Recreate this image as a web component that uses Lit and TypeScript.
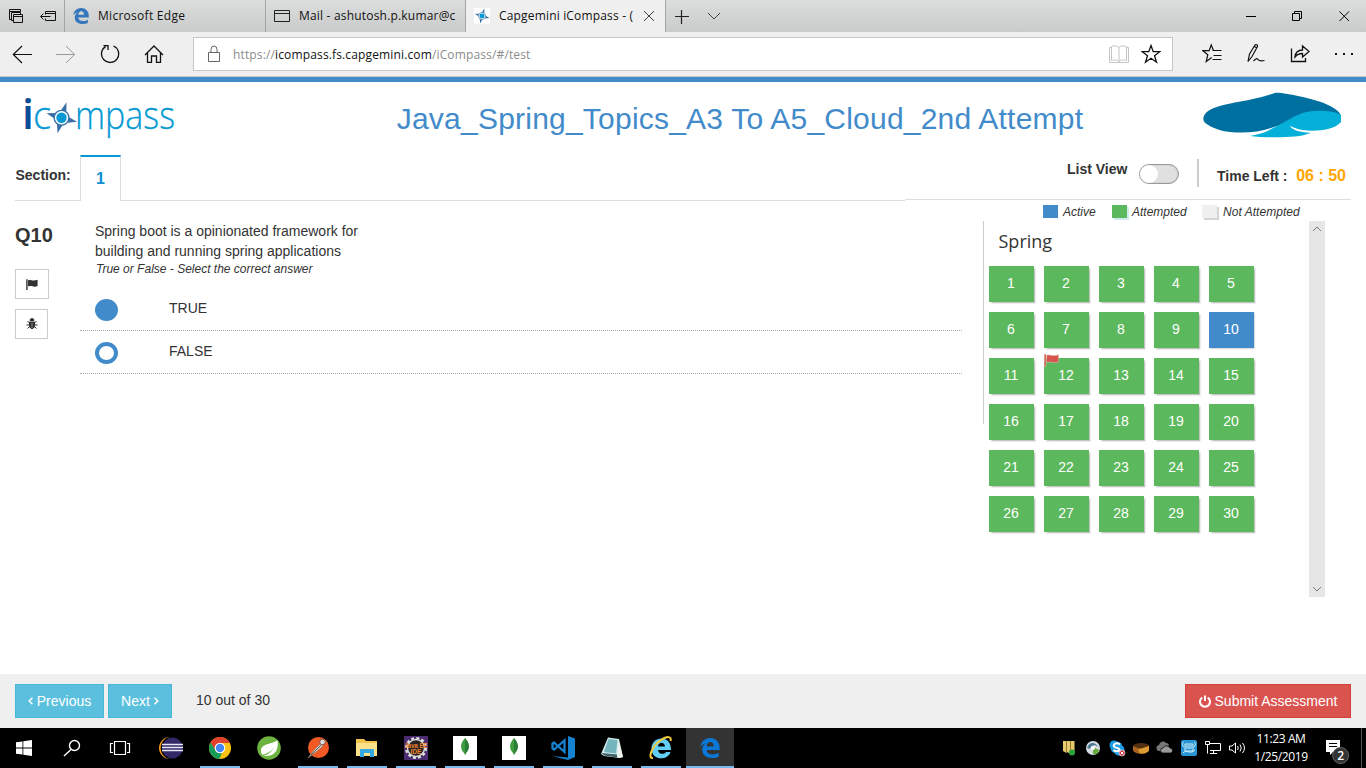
import { LitElement, html, css, svg } from "lit";
import { customElement } from "lit/decorators.js";
import { classMap } from "lit/directives/class-map.js";

const FLAG = "M0.200 0.300H1.600V11H0.200ZM2 1.400C4.400 0 6.200 2.600 11.600 0.700V7C7.600 8.800 5.400 6 2 7.500Z";

const edgeLogo = (color: string, size: number) => html`<svg width=${size} height=${size} viewBox="0 0 20 20">
  <path fill=${color} d="M0.3 9.2C1 3.5 5 0 10.2 0C16 0 19.7 4.4 19.7 9.6V12H6.6C6.8 15 9.5 16.4 12.6 16.4C15 16.4 17 15.7 18.6 14.8V18.7C16.700 19.6 14.400 20 12.100 20C6.2 20 2.200 17 2.200 11.800C2.200 9 3.600 6.600 6 5.200C3.500 5.800 1.500 7.200 0.300 9.200ZM6.700 8.400H13.700C13.700 5.600 12.400 4 10.300 4C8.300 4 7 5.800 6.700 8.400Z"/></svg>`;

const compass = (x: number, y: number, s: number) => svg`<g transform="translate(${x} ${y}) scale(${s})">
  <path fill="#3a6da5" d="M5 -15.500L4.800 -6L-0.500 -7.500ZM-4 15.500L-4.500 6L1 7.500ZM-15 -4.500L-6.500 -4.800L-7.500 0.500ZM15.500 4L6.500 5L7.500 -0.500Z"/>
  <circle r="7.400" fill="#fff" stroke="#3a73ab" stroke-width="1.400"/>
  <circle r="5.200" fill="#0699d3"/></g>`;

@customElement("edge-chrome")
class EdgeChrome extends LitElement {
  static styles = css`
    :host { display: block; font: 12px "Open Sans", sans-serif; color: #111; }
    svg { display: block; flex: none; }
    .tabs { display: flex; height: 32px; background: linear-gradient(#dcdedd, #c9cbca); }
    .sets { display: flex; width: 64px; box-sizing: border-box; padding: 8px 0 0 8px; gap: 15px; }
    .tab { display: flex; box-sizing: border-box; width: 201px; height: 32px; padding: 0 9px 0 8px; border-left: 1px solid #a3a5a4; align-items: center; gap: 9px; }
    .tab.two { width: 200px; }
    .tab.active { width: 201px; padding-right: 6px; background: #efefef; border-right: 1px solid #a3a5a4; }
    .name { flex: 1; overflow: hidden; white-space: nowrap; line-height: 30px; letter-spacing: 0.28px; }
    .two .name { letter-spacing: 0.19px; }
    .active .name { flex: none; width: 135px; letter-spacing: 0.17px; }
    .plus { margin: 10px 0 0 9px; }
    .more { margin: 12px 0 0 18px; }
    .win { display: flex; margin-left: auto; padding: 11px 17px 0 0; gap: 36px; }
    .win svg + svg { margin-right: -0.500px; }
    .nav { display: flex; height: 44px; background: #efefef; border-bottom: 1px solid #c9c9c9; align-items: flex-start; }
    .moves { display: flex; width: 193px; box-sizing: border-box; padding: 12px 0 0 12px; gap: 24px; }
    .url { display: flex; box-sizing: border-box; width: 980px; height: 34px; margin-top: 5px; padding: 0 11px 0 13px; border: 1px solid #c6c6c6; background: #fff; align-items: center; }
    .addr { flex: 1; margin-left: 12px; line-height: 33px; color: #8c8c8c; letter-spacing: 0.14px; }
    .addr b { font-weight: 400; color: #111; }
    .star { margin-left: 12px; }
    .tools { display: flex; margin-left: auto; padding: 11px 12px 0 0; gap: 24px; }
    .stripe { height: 5px; background: #428bca; }
  `;
  render() {
    return html`
      <div class="tabs">
        <div class="sets">
          <svg width="16" height="16" fill="none" stroke="#111" stroke-width="1"><path d="M3.500 11.500H1.500V1.500H12.500V3.500M1.500 3.500H12.500M5.500 12.500H3.500V4.500H12.500V6.500M5.500 6.500H14.500V14.500H5.500ZM5.500 8.500H14.500"/></svg>
          <svg width="18" height="16" fill="none" stroke="#111"><path d="M6.500 6.500V3.500H16.500V12.500H6.500V10.500M6.500 5.500H16.500M11.500 8.500H2M4.500 5.500L1.500 8.500L4.500 11.500"/></svg>
        </div>
        <div class="tab">${edgeLogo("#3477bd", 16)}<span class="name">Microsoft Edge</span></div>
        <div class="tab two">
          <svg width="16" height="14" fill="none" stroke="#222"><path d="M0.500 1.500H15.500V12.500H0.500ZM0.500 4.500H15.500"/></svg>
          <span class="name">Mail - ashutosh.p.kumar@c</span>
        </div>
        <div class="tab active">
          <svg width="16" height="16"><rect width="16" height="16" fill="#fff"/>${compass(8, 8, 0.48)}</svg>
          <span class="name">Capgemini iCompass - (</span>
          <svg width="12" height="12" stroke="#444" fill="none"><path d="M1 1L11 11M11 1L1 11"/></svg>
        </div>
        <svg class="plus" width="14" height="14" stroke="#222"><path d="M0 6.500H14M6.500 0V14" stroke-width="1.200"/></svg>
        <svg class="more" width="14" height="8" fill="none" stroke="#444"><path d="M1 1L7 7L13 1"/></svg>
        <div class="win">
          <svg width="10" height="10" stroke="#000"><path d="M0 5.500H10"/></svg>
          <svg width="11" height="11" fill="none" stroke="#000"><path d="M0.500 2.500H7.500V9.500H0.500ZM2.500 2.500V0.500H9.500V7.500H7.500"/></svg>
          <svg width="11" height="11" stroke="#000"><path d="M0.500 0.500L10 10M10 0.500L0.500 10"/></svg>
        </div>
      </div>
      <div class="nav">
        <div class="moves">
          <svg width="20" height="20" fill="none" stroke="#111" stroke-width="1.200"><path d="M1 10.500H20M10 2L1.300 10.500L10 19"/></svg>
          <svg width="20" height="20" fill="none" stroke="#999"><path d="M0 10.500H19M10 2L18.700 10.500L10 19"/></svg>
          <svg width="20" height="20" fill="none" stroke="#111" stroke-width="1.300"><path d="M13.500 2A8.600 8.600 0 1 1 5.500 2.600M3.500 1.600H8V6"/></svg>
          <svg width="20" height="20" fill="none" stroke="#111" stroke-width="1.300"><path d="M1 11L10 2L19 11M3.500 9V18.400H7.500V12H12.500V18.400H16.500V9"/></svg>
        </div>
        <div class="url">
          <svg width="14" height="18" fill="none" stroke="#666"><path d="M1.500 7.500H12.500V16.500H1.500ZM4 7.500V4.500A3 3.500 0 0 1 10 4.500V7.500"/></svg>
          <span class="addr">https://<b>icompass.fs.capgemini.com</b>/iCompass/#/test</span>
          <svg width="20" height="18" fill="none" stroke="#c4c4c4"><path d="M10 2.500C8 0.500 5 0.500 2.500 1.500V15.500C5 14.700 8 14.700 10 16.500C12 14.700 15 14.700 17.500 15.500V1.500C15 0.500 12 0.500 10 2.500V16.500M2.500 2.500H0.500V17.500H19.500V2.500H17.500"/></svg>
          <svg class="star" width="20" height="20" fill="none" stroke="#111" stroke-width="1.300"><path d="M10 1.500L12.200 7.700H18.800L13.500 11.700L15.500 18.200L10 14.300L4.500 18.200L6.500 11.700L1.200 7.700H7.800Z"/></svg>
        </div>
        <div class="tools">
          <svg width="20" height="20" fill="none" stroke="#111" stroke-width="1.200"><path d="M11.500 7.500L9.200 2L7.200 7.700H1L5.800 11.700L4.200 18.500L9.700 14.500M10.500 7.500H19.500M11.500 12.500H19.500M10.500 16.500H19.500"/></svg>
          <svg width="20" height="20" fill="none" stroke="#111" stroke-width="1.200"><path d="M2 18.500L3.500 11L9 2C10 1 12 2 11.500 3.500L6 13.500L2 18.500ZM8.500 3.500L11 5M7.500 18C10 15.500 11 15 12 16.500S14 18.500 18.500 17.500"/></svg>
          <svg width="20" height="20" fill="none" stroke="#111" stroke-width="1.300"><path d="M1.500 5.500V18.500H15.500V15M5 14C5.500 9 8 7 12.500 7V3L19 8.500L12.500 14V10.500C9 10.500 7 11.500 5 14Z"/></svg>
          <svg width="20" height="20" fill="#111"><path d="M1 10h2v2h-2zM9 10h2v2h-2zM17 10h2v2h-2z"/></svg>
        </div>
      </div>
      <div class="stripe"></div>`;
  }
}

@customElement("test-header")
class TestHeader extends LitElement {
  static styles = css`
    :host { display: block; height: 119px; color: #333; font: 14px "Liberation Sans", Arial, sans-serif; }
    svg { display: block; flex: none; }
    .top { display: flex; height: 73px; }
    .logo { margin: 1px 0 0 20px; }
    .title { flex: 1; margin: 17px 0 0 58px; text-align: center; font-size: 30px; line-height: 40px; letter-spacing: 0.22px; color: #428bca; white-space: nowrap; }
    .brand { margin: 9px 24px 0 0; }
    .bar { display: flex; height: 46px; padding: 0 15px; }
    .left { display: flex; width: 890px; height: 46px; box-sizing: border-box; background: linear-gradient(#ddd, #ddd) 0 45px / 100% 1px no-repeat; }
    .label { box-sizing: border-box; width: 65px; padding-left: 0.5px; font-weight: 700; line-height: 40px; }
    .section { box-sizing: border-box; width: 41px; height: 46px; border: 1px solid #ddd; border-top: 2px solid #0699d3; border-bottom: 0; background: #fff; color: #0e8fcf; font-size: 16px; font-weight: 700; text-align: center; line-height: 43px; }
    .right { display: flex; flex: 1; box-sizing: border-box; height: 45px; padding-left: 162px; border-bottom: 1px solid #ddd; }
    .list { width: 72px; font-weight: 700; line-height: 29px; white-space: nowrap; }
    .toggle { box-sizing: border-box; width: 40px; height: 20px; margin-top: 9px; border: 1px solid #999; border-radius: 10px; background: #e0e0e0; box-shadow: inset 0 0 1px #888; }
    .knob { width: 18px; height: 18px; border-radius: 9px; background: #fff; }
    .rule { width: 2px; height: 28px; margin: 4px 18px 0; background: #ccc; }
    .time { font-weight: 700; line-height: 42px; white-space: nowrap; }
    .clock { margin-left: auto; padding-right: 5px; font-size: 16px; font-weight: 700; line-height: 41px; color: #ffa500; }
  `;
  render() {
    return html`
      <div class="top">
        <svg class="logo" width="200" height="64" font-family="Open Sans, sans-serif">
          <text x="2" y="46" font-size="41" font-weight="600" fill="#0b4d96" textLength="12" lengthAdjust="spacingAndGlyphs">i</text>
          <g font-size="39" font-weight="300" fill="#0699d3" stroke="#0699d3" stroke-width="0.300">
            <text x="13" y="46" textLength="18" lengthAdjust="spacingAndGlyphs">c</text>
            <text x="55" y="46" textLength="100" lengthAdjust="spacingAndGlyphs">mpass</text>
          </g>
          ${compass(41.500, 34.800, 1)}
        </svg>
        <div class="title">Java_Spring_Topics_A3 To A5_Cloud_2nd Attempt</div>
        <svg class="brand" width="140" height="48">
          <path fill="#0070a0" d="M1.300 28C1.300 21 10 16 26 13C35 11 45 9.500 53 7.500C62 5.300 70 2.800 74 1.800Q76 1.400 79 2C88 3.500 95 4.600 103 6.500C112 8.700 120 11 126 14C132 16.800 137.500 20 139 25L116 22L88 31L69 37C60 40 50 41.500 39.700 41.500C26 41.500 17 39.500 11 36.500C4.500 33.500 1.300 31 1.300 28Z"/>
          <path fill="#04afd8" d="M48 45C56 43.500 64 41.500 70 37.500C77 34.500 82 31 88 28C97 22.500 106 19.700 116 19.700C126 19.700 134 21 139 24V31C136 34.500 132 36.500 126 38C120 39.500 112 40 106 39.500C98 39 93 37.500 88 34.700C89 38 96 41.500 109 41.700C104 43.500 99 45 93 45.500C80 46.800 60 46.500 48 45Z"/>
        </svg>
      </div>
      <div class="bar">
        <div class="left"><span class="label">Section:</span><div class="section">1</div></div>
        <div class="right">
          <span class="list">List View</span>
          <div class="toggle"><div class="knob"></div></div>
          <div class="rule"></div>
          <span class="time">Time Left :</span>
          <span class="clock">06 : 50</span>
        </div>
      </div>`;
  }
}

@customElement("question-view")
class QuestionView extends LitElement {
  static styles = css`
    :host { display: flex; width: 962px; padding-top: 20px; color: #333; font: 14px/20px "Liberation Sans", Arial, sans-serif; }
    svg { display: block; }
    .side { width: 65px; margin-left: 15px; }
    .num { height: 48px; font-size: 20px; font-weight: 700; line-height: 29px; }
    .btn { display: flex; box-sizing: border-box; width: 34px; height: 30px; margin-bottom: 10px; border: 1px solid #ccc; background: #fff; justify-content: center; padding-top: 9px; }
    .btn.bug { width: 33px; padding-top: 8px; }
    .body { flex: 1; }
    .text { width: 290px; padding-left: 15px; }
    .hint { height: 27px; padding-left: 16px; font-size: 12px; font-style: italic; line-height: 16px; }
    .option { display: flex; box-sizing: border-box; height: 43px; padding-left: 15px; border-bottom: 1px dotted #aaa; }
    .radio { box-sizing: border-box; width: 23px; height: 22px; margin: 11px 51px 0 0; border: 4px solid #428bca; border-radius: 50%; }
    .radio.on { background: #428bca; }
    .value { line-height: 41px; }
  `;
  render() {
    const options = [{ label: "TRUE", on: true }, { label: "FALSE", on: false }];
    return html`
      <div class="side">
        <div class="num">Q10</div>
        <div class="btn"><svg width="12" height="11"><path d=${FLAG} fill="#333"/></svg></div>
        <div class="btn bug"><svg width="12" height="12" fill="none" stroke="#333"><path d="M4 2.500A2 2 0 0 1 8 2.500Z" fill="#333"/><path d="M3.500 4H8.500V8.500Q8 10.500 6 10.500Q4 10.500 3.500 8.500Z" fill="#333"/><path d="M3.500 5L1.500 3M8.500 5L10.500 3M3 7H0.500M9 7H11.500M3.500 8.500L1.500 10.500M8.500 8.500L10.500 10.500"/><path d="M6 5V10" stroke="#aaa" stroke-width="0.700"/></svg></div>
      </div>
      <div class="body">
        <div class="text">Spring boot is a opinionated framework for building and running spring applications</div>
        <div class="hint">True or False - Select the correct answer</div>
        ${options.map((o) => html`<div class="option"><div class=${classMap({ radio: true, on: o.on })}></div><span class="value">${o.label}</span></div>`)}
      </div>`;
  }
}

@customElement("question-palette")
class QuestionPalette extends LitElement {
  static styles = css`
    :host { display: block; width: 342px; margin-left: 21px; color: #333; font: 14px "Liberation Sans", Arial, sans-serif; }
    svg { display: block; }
    .legend { display: flex; height: 20px; padding-left: 60px; font-size: 12px; font-style: italic; line-height: 22px; white-space: nowrap; }
    .key { display: flex; flex: none; width: 69px; gap: 5px; }
    .key.second { width: 90px; }
    .key.last { width: 100px; letter-spacing: 0.03px; }
    .swatch { flex: none; width: 15px; height: 13px; margin-top: 4px; background: #428bca; }
    .swatch.done { background: #5cb85c; box-shadow: 2px 2px 0 #d3eaf3; }
    .swatch.none { background: #f0f0f0; box-shadow: 2px 2px 0 #d4d4d4; margin-right: 1px; }
    .pane { display: flex; height: 376px; }
    .line { width: 1px; height: 203px; background: #ccc; }
    .area { flex: 1; padding-left: 5px; }
    .topic { height: 45px; padding-left: 9.500px; font: 18px/40px "Open Sans", sans-serif; box-sizing: border-box; }
    .grid { display: grid; grid-template-columns: repeat(5, 45px); gap: 10px; }
    .cell { position: relative; box-sizing: border-box; height: 36px; padding-right: 1px; background: #5cb85c; color: #fff; text-align: center; line-height: 34px; box-shadow: 1.500px 1.500px 1.500px #c4c4c4; }
    .cell.active { background: #428bca; box-shadow: 1px 1px 1px #ddd; }
    .flag { position: absolute; left: -0.5px; top: -4px; }
    .scroll { display: flex; flex-direction: column; justify-content: space-between; width: 16px; box-sizing: border-box; padding: 5px 3px; background: #e6e6e6; }
  `;
  render() {
    return html`
      <div class="legend">
        <div class="key"><div class="swatch"></div>Active</div>
        <div class="key second"><div class="swatch done"></div>Attempted</div>
        <div class="key last"><div class="swatch none"></div>Not Attempted</div>
      </div>
      <div class="pane">
        <div class="line"></div>
        <div class="area">
          <div class="topic">Spring</div>
          <div class="grid">
            ${Array.from({ length: 30 }, (_, i) => i + 1).map((n) => html`<div class=${classMap({ cell: true, active: n === 10 })}>${n}${n === 12
              ? html`<svg class="flag" width="15" height="13" viewBox="0 0 12 11.500" preserveAspectRatio="none"><path d=${FLAG} fill="#d9534f" stroke="#d9b8a8" stroke-width="0.500"/></svg>` : ""}</div>`)}
          </div>
        </div>
        <div class="scroll">
          <svg width="10" height="6" fill="none" stroke="#777"><path d="M1 5L5 1L9 5"/></svg>
          <svg width="10" height="6" fill="none" stroke="#777"><path d="M1 1L5 5L9 1"/></svg>
        </div>
      </div>`;
  }
}

@customElement("test-footer")
class TestFooter extends LitElement {
  static styles = css`
    :host { display: flex; box-sizing: border-box; height: 54px; padding: 10px 15px 0; background: #efefef; color: #333; font: 14px "Liberation Sans", Arial, sans-serif; }
    .btn { display: flex; box-sizing: border-box; height: 34px; margin-right: 4px; border: 1px solid #46b8da; background: #5bc0de; color: #fff; align-items: center; justify-content: center; gap: 4px; white-space: nowrap; line-height: 32px; }
    .prev { width: 89px; }
    .next { width: 64px; }
    .count { margin-left: 20px; line-height: 32px; }
    .submit { width: 166px; margin: 0 0 0 auto; background: #d9534f; border-color: #d43f3a; }
  `;
  render() {
    return html`
      <div class="btn prev"><svg width="5" height="8" fill="none" stroke="#fff" stroke-width="1.500"><path d="M4.500 0.800L1.200 4L4.500 7.200"/></svg>Previous</div>
      <div class="btn next">Next<svg width="5" height="8" fill="none" stroke="#fff" stroke-width="1.500"><path d="M0.500 0.800L3.800 4L0.500 7.200"/></svg></div>
      <span class="count">10 out of 30</span>
      <div class="btn submit"><svg width="12" height="13" fill="none" stroke="#fff" stroke-width="2"><path d="M3.300 2.500A5 5 0 1 0 8.700 2.500M6 0.500V6"/></svg>Submit Assessment</div>`;
  }
}

const mongo = html`<svg width="24" height="24"><rect width="24" height="24" fill="#fff"/><path d="M12 2C7.500 7 6.500 12 11 17L12 19L13 17C17.500 12 16.500 7 12 2Z" fill="#3f9c41"/><path d="M12 2V19L13 17C17.500 12 16.500 7 12 2Z" fill="#2a7f36"/></svg>`;

const apps = [
  { run: false, icon: html`<svg width="24" height="24"><circle cx="11" cy="12" r="11" fill="#f79a1c"/><circle cx="13" cy="12" r="11.300" fill="#000"/><circle cx="13.500" cy="12" r="10.400" fill="#322a68"/><path d="M3 8.500H24M3 11.500H24M3 14.500H24" stroke="#e8e8f4" stroke-width="1.600"/></svg>` },
  { run: true, icon: html`<svg width="24" height="24"><circle cx="12" cy="12" r="11" fill="#fbc116"/><path d="M2.500 6.500A11 11 0 0 1 21.500 6.500L22 7H12L7 14.500Z" fill="#e1402f"/><path d="M2.500 6.500L7.500 14.500Q10 17 14 16.500L11.500 23A11 11 0 0 1 2.500 6.500Z" fill="#149c58"/><circle cx="12" cy="12" r="5.300" fill="#fff"/><circle cx="12" cy="12" r="4.200" fill="#4385f4"/></svg>` },
  { run: false, icon: html`<svg width="24" height="24"><circle cx="12" cy="12" r="11.800" fill="#6db33f"/><path d="M20.500 4C17 8 5 7 4 14C3.500 18 6 20 9 20C18 20 22 14 20.500 4Z" fill="#fff"/><path d="M4 19C10 18 15 15 18 10C14 17 9 20 4 20Z" fill="#6db33f"/></svg>` },
  { run: true, icon: html`<svg width="24" height="24"><circle cx="12.500" cy="11.500" r="10.500" fill="#f15a24"/><path d="M2 22L8 14L15 7L17 10L10 16Z" fill="#d8d2ca" stroke="#94705c" stroke-width="0.700"/><path d="M5 19L16 8" stroke="#60554c" stroke-width="1"/><circle cx="16.500" cy="6" r="2.800" fill="#ddd" stroke="#815443"/></svg>` },
  { run: true, icon: html`<svg width="24" height="24"><path d="M1 3H9L11 5H22V20H1Z" fill="#f3c44c"/><path d="M1 7H22V20H1Z" fill="#fde08a"/><path d="M5 21V14Q5 13 6 13H18Q19 13 19 14V21H15V17H9V21Z" fill="#36a8e3"/></svg>` },
  { run: true, icon: html`<svg width="24" height="24"><rect width="24" height="24" fill="#4b2c70"/><circle cx="12" cy="12" r="9.800" fill="#282227" stroke="#ddd" stroke-width="2.500" stroke-dasharray="3 2.130"/><circle cx="12" cy="12" r="8.500" fill="#282227" stroke="#ddd" stroke-width="1.400"/><g font-family="Liberation Sans" font-weight="700" fill="#f08529"><text x="0.500" y="11.500" font-size="7" textLength="23" lengthAdjust="spacingAndGlyphs">Java EE</text><text x="6.500" y="18" font-size="8" textLength="11" lengthAdjust="spacingAndGlyphs">IDE</text></g></svg>` },
  { run: true, icon: mongo },
  { run: true, icon: mongo },
  { run: true, icon: html`<svg width="24" height="24"><path d="M17 0L24 2.500V21L17 24L1 20L17 21.500Z" fill="#1583d0"/><path d="M3 6.500L13.500 16V4.500L3 13.500L1.500 12.500V7.500Z" fill="none" stroke="#1583d0" stroke-width="2.300"/></svg>` },
  { run: true, icon: html`<svg width="24" height="24"><path d="M8 1.500L19 3L23 21L20 22L4 20L1 18Z" fill="#d4e9ea"/><path d="M8.500 3L17.500 4L16 17.500L4 16Z" fill="#75b5bd"/><path d="M18.500 4L23 21L17.500 22Z" fill="#edf2ef"/><path d="M1.500 17L17 18.500V21.500L4 19.500Z" fill="#3f6369"/></svg>` },
  { run: true, icon: html`<svg width="24" height="24"><path fill="#62cdf5" d="M2.500 12.500C2.500 6.500 7 2.500 12.500 2.500C19 2.500 22 7.500 22 14H9C9.500 19 16 18.500 17 16H21.500C19 25 2.500 25 2.500 12.500ZM9 10.500H16C15.500 5.500 9.500 5.500 9 10.500Z"/><path d="M4 22C-2 23 3 10 12 4C18 0 23 0 21.500 5" fill="none" stroke="#f6cb3a" stroke-width="2"/></svg>` },
  { run: true, active: true, icon: edgeLogo("#0b78d7", 20) },
];

@customElement("win-taskbar")
class WinTaskbar extends LitElement {
  static styles = css`
    :host { display: flex; height: 40px; background: #000; color: #fff; font: 12px "Open Sans", sans-serif; }
    svg { display: block; flex: none; overflow: visible; }
    .start { display: flex; width: 147px; height: 40px; box-sizing: border-box; padding-left: 16px; align-items: center; gap: 31px; }
    .views { margin-left: -3px; }
    .apps { display: flex; gap: 1px; }
    .app { display: flex; flex-direction: column; width: 48px; height: 40px; align-items: center; }
    .app.active { background: #333; }
    .pic { display: flex; height: 38px; align-items: center; padding-top: 1px; box-sizing: border-box; }
    .run .pic + .mark { background: #76b9ed; }
    .mark { width: 40px; height: 2px; }
    .active .mark { width: 48px; }
    .tray { display: flex; margin-left: auto; align-items: center; gap: 8px; }
    .clock { width: 64px; margin: 0 4px 0 -4px; text-align: center; line-height: 18.500px; white-space: nowrap; letter-spacing: -0.380px; }
    .note { margin-right: 4px; }
    .peek { width: 4px; height: 40px; border-left: 1px solid #555; }
  `;
  render() {
    return html`
      <div class="start">
        <svg width="16" height="16" fill="#fff"><path d="M0 2.300L6.500 1.400V7.500H0ZM7.300 1.300L16 0V7.500H7.300ZM0 8.400H6.500V14.600L0 13.700ZM7.300 8.400H16V16L7.300 14.700Z"/></svg>
        <svg width="18" height="18" fill="none" stroke="#fff" stroke-width="1.400"><circle cx="11.500" cy="6.500" r="5"/><path d="M8 10.500L1 17"/></svg>
        <svg class="views" width="22" height="16" fill="none" stroke="#fff"><path d="M5.500 1.500H16.500V14.500H5.500ZM4 3.500H1.500V12.500H4M18 3.500H20.500V12.500H18" stroke-width="1.200"/></svg>
      </div>
      <div class="apps">${apps.map((a) => html`<div class=${classMap({ app: true, run: a.run, active: !!a.active })}><div class="pic">${a.icon}</div><div class="mark"></div></div>`)}</div>
      <div class="tray">
        <svg width="16" height="16"><path d="M2 1H5.500V13L2 11ZM6 1H9.500V14L6 12ZM10 1H13.500V12L10 15Z" fill="#e9c96e"/><path d="M5.500 1V13M9.500 1V14" stroke="#a78835" stroke-width="0.600"/><circle cx="11" cy="12.500" r="3" fill="#2aa53a"/></svg>
        <svg width="16" height="16"><circle cx="8" cy="8" r="7" fill="#d6dde2"/><path d="M2 8C4 1 11 2 13 7C10 4 6 5 5 9Z" fill="#4d7994"/><path d="M8 7L14 10L12 14H8Z" fill="#64ab35"/><circle cx="8" cy="8" r="2" fill="#fff"/></svg>
        <svg width="16" height="16"><circle cx="5" cy="5" r="4.500" fill="#1c9de5"/><circle cx="10" cy="10" r="5.500" fill="#1c9de5"/><circle cx="7.500" cy="7.500" r="6" fill="#1c9de5"/><path d="M11 4.500C8 2 4 4 5 6.500C6 8 10 7.500 10.500 9.500C10 12 6 11.500 4.500 10" fill="none" stroke="#fff" stroke-width="2"/><circle cx="13" cy="13" r="3" fill="#d12f3b" stroke="#fff" stroke-width="0.600"/><path d="M11.500 11.500L14.500 14.500M14.500 11.500L11.500 14.500" stroke="#fff"/></svg>
        <svg width="16" height="16"><path d="M0 6V10C1 15 15 15 16 10V5Z" fill="#a8641f"/><path d="M0 6C2 2 14 2 16 5.500C14 9 8 10 0 6Z" fill="#543013"/><path d="M5 9.500L16 6V10C15 13 10 14 7 13.500Z" fill="#dc9a34"/></svg>
        <svg width="16" height="16"><path d="M3 11A3 3 0 0 1 2 5A4 4 0 0 1 9 3A3 3 0 0 1 12 5L6 12Z" fill="#777"/><path d="M6 13A2.500 2.500 0 0 1 6 8A4 4 0 0 1 13 8A2.600 2.600 0 0 1 14 13Z" fill="#999" stroke="#000" stroke-width="0.700"/></svg>
        <svg width="16" height="16"><rect width="16" height="16" rx="2" fill="#2795d5"/><path d="M4 4H12V11H4ZM2 13C5 9 10 15 14 10M3 2C1 3 1 5 3 7M13 2C15 3 15 5 13 7M5 6H11M5 8H11" fill="none" stroke="#d7effb"/></svg>
        <svg width="16" height="16" fill="none" stroke="#fff"><path d="M5 3.500H15.500V10.500H5M5 13.500H12M8.500 11V13M2.500 5V13.500M0.500 1.500H4.500V4.500H0.500Z"/></svg>
        <svg width="16" height="16" fill="none" stroke="#fff"><path d="M0.500 6V10H3L6.500 13V3L3 6ZM8.500 6Q10 8 8.500 10M11 4.500Q13.500 8 11 11.500M13.500 3Q17.500 8 13.500 13"/></svg>
        <div class="clock">11:23 AM<br />1/25/2019</div>
        <svg class="note" width="24" height="32"><path d="M1 8H15V20H8L5 23V20H1Z" fill="#fff"/><path d="M4 11.500H12M4 14.500H12" stroke="#000"/><circle cx="15.600" cy="23.500" r="8" fill="#333" stroke="#666"/><text x="15.600" y="28" text-anchor="middle" font-size="12" font-weight="600" fill="#fff">2</text></svg>
        <div class="peek"></div>
      </div>`;
  }
}

@customElement("app-root")
class AppRoot extends LitElement {
  static styles = css`
    :host { display: flex; flex-direction: column; width: 1366px; height: 768px; background: #fff; overflow: hidden; }
    .content { display: flex; flex: 1; }
  `;
  render() {
    return html`
      <edge-chrome></edge-chrome>
      <test-header></test-header>
      <div class="content"><question-view></question-view><question-palette></question-palette></div>
      <test-footer></test-footer>
      <win-taskbar></win-taskbar>`;
  }
}
